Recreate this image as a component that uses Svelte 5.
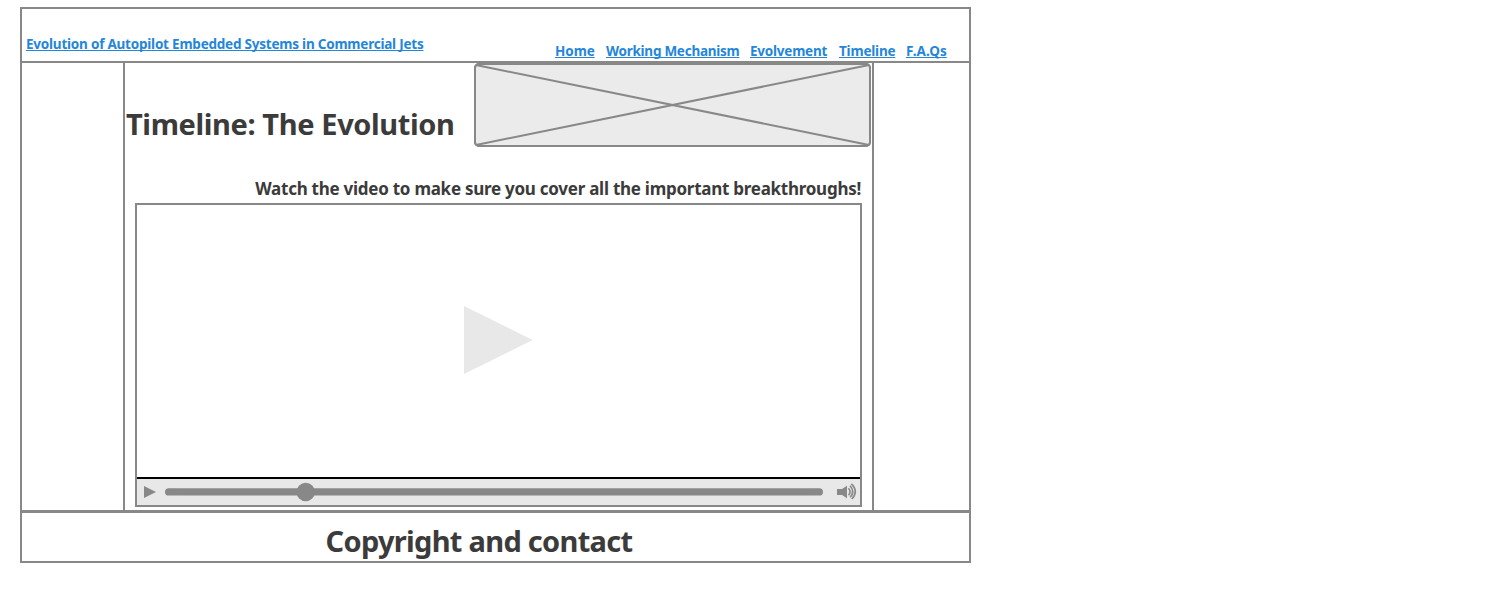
<script>
  const nav = [
    { label: 'Home', spacing: -0.06, width: 51 },
    { label: 'Working Mechanism', spacing: -0.26, width: 144 },
    { label: 'Evolvement', spacing: -0.22, width: 89 },
    { label: 'Timeline', spacing: -0.2, width: 67 },
    { label: 'F.A.Qs', spacing: 0.08, width: 41 }
  ];
</script>

<div class="page">
  <header>
    <a class="brand" href="#top">Evolution of Autopilot Embedded Systems in Commercial Jets</a>
    <nav>
      {#each nav as item}
        <span style="width: {item.width}px; letter-spacing: {item.spacing}px"><a href="#top">{item.label}</a></span>
      {/each}
    </nav>
  </header>

  <div class="body">
    <aside></aside>
    <main>
      <div class="hero">
        <h1>Timeline: The Evolution</h1>
        <svg class="placeholder" width="397" height="84" viewBox="0 0 397 84">
          <rect x="1" y="1" width="395" height="82" rx="4" fill="#ebebeb" />
          <path d="M2 2 395 82M2 82 395 2" />
          <rect x="1" y="1" width="395" height="82" rx="4" fill="none" />
        </svg>
      </div>
      <p>Watch the video to make sure you cover all the important breakthroughs!</p>
      <section class="video">
        <div class="screen">
          <svg width="69" height="69" viewBox="0 0 69 69"><path d="M0 0 68.5 34 0 68Z" fill="#e8e8e8" /></svg>
        </div>
        <div class="controls">
          <svg width="723" height="26" viewBox="0 0 723 26">
            <path d="M7 7 19 13 7 19Z" fill="#888" />
            <rect x="28" y="9.2" width="658" height="7.4" rx="3.7" fill="#888" />
            <path d="M41 9.5H673" stroke="#a2a2a2" stroke-width="1" />
            <circle cx="168.7" cy="13" r="9.2" fill="#888" />
            <path d="M700 10H705L710 6.7V19.3L705 16H700Z" fill="#888" />
            <g fill="none" stroke="#888" stroke-width="1.6">
              <path d="M711.5 9.2Q714.6 13 711.5 16.2" />
              <path d="M713 6.7Q718.4 12.5 713.2 18.2" />
              <path d="M714.4 4.8Q722 12 714.8 20" />
            </g>
          </svg>
        </div>
      </section>
    </main>
    <aside></aside>
  </div>

  <footer>Copyright and contact</footer>
</div>

<style>
  :global(body) { margin: 0; background: #fff; }
  .page {
    box-sizing: border-box;
    width: 951px;
    height: 556px;
    margin: 7px 0 0 20px;
    border: 2px solid #888;
    display: flex;
    flex-direction: column;
    font-family: 'Noto Sans', sans-serif;
    font-weight: 700;
    color: #3b3b3b;
    white-space: nowrap;
  }
  header {
    box-sizing: border-box;
    height: 54px;
    border-bottom: 2px solid #888;
    display: flex;
    justify-content: space-between;
    align-items: flex-start;
    padding: 25px 22px 0 4px;
    font-size: 13.5px;
    line-height: 20px;
  }
  a {
    color: #2486d9;
    text-decoration: underline;
    text-decoration-thickness: 1px;
    text-underline-offset: 1px;
    text-decoration-skip-ink: none;
  }
  .brand { letter-spacing: -0.22px; }
  nav { display: flex; padding-top: 7px; }
  .body {
    height: 447px;
    display: grid;
    grid-template-columns: 101px 751px 1fr;
  }
  main {
    box-sizing: border-box;
    border: solid #888;
    border-width: 0 2px;
  }
  .hero {
    display: flex;
    justify-content: space-between;
    padding-right: 1px;
    height: 84px;
  }
  h1 {
    margin: 41px 0 0 1px;
    font-size: 29px;
    font-weight: 700;
    line-height: 40px;
    letter-spacing: -0.38px;
  }
  .placeholder { stroke: #888; stroke-width: 2; }
  p {
    margin: 30px 11px 2px 0;
    font-size: 17px;
    line-height: 24px;
    letter-spacing: -0.26px;
    text-align: right;
  }
  .video {
    box-sizing: border-box;
    width: 727px;
    height: 304px;
    margin-left: 10px;
    border: 2px solid #888;
  }
  .screen {
    box-sizing: border-box;
    height: 274px;
    border-bottom: 2px solid #000;
    padding: 101px 0 0 327px;
  }
  .controls { height: 26px; background: #e8e8e8; }
  svg { display: block; }
  footer {
    border-top: 3px solid #888;
    padding: 8px 33px 0 0;
    flex: 1;
    text-align: center;
    font-size: 29px;
    line-height: 40px;
    letter-spacing: -0.7px;
  }
</style>
